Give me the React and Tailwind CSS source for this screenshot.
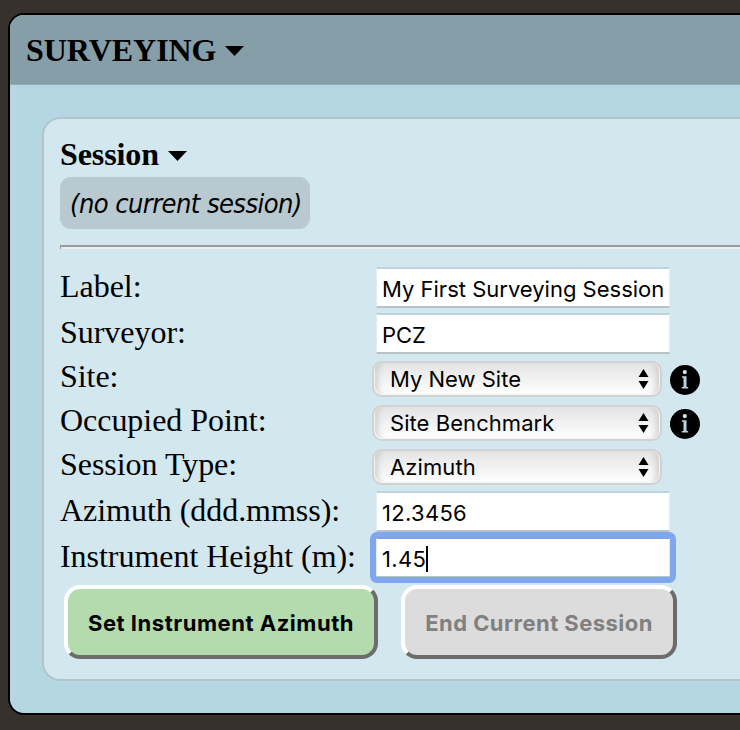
const Caret = () => (
  <svg className="mt-[3px] h-[10px] w-[19px]" viewBox="0 0 19 10">
    <path d="M0 0H19L9.5 10Z" fill="#000" />
  </svg>
);

const InfoIcon = () => (
  <svg className="mt-[9px] ml-[8px] h-[30px] w-[30px] shrink-0" viewBox="0 0 30 30">
    <circle cx="15" cy="15" r="15" fill="#000" />
    <circle cx="14.8" cy="7.1" r="2.1" fill="#d3e7ee" />
    <path d="M11.9 11.3H16.5V21.7L18.2 22.2V23.4H11.7V22.2L13.5 21.7V13L11.9 12.5Z" fill="#b8d3de" />
  </svg>
);

const TextRow = ({ label, value, focused, spacing }) => (
  <div className="flex h-[46px] items-start">
    <label className="mt-[4px] w-[316px] whitespace-nowrap text-[32px] leading-[36px] tracking-[-0.04px]">{label}</label>
    <div
      className={
        "flex w-[294px] items-center border-x border-x-[#e3ecef] border-b-[#b9c2c7] bg-white pl-[5px] font-['Inter',sans-serif] text-[22px] leading-[30px] whitespace-nowrap " +
        (focused
          ? "relative z-10 mt-[4px] h-[39px] rounded-[1px] border-t border-b border-t-[#7a9fe3] pt-[3px] outline-[6px] outline-[#80a6ee]"
          : "mt-[3px] h-[41px] border-t-2 border-b-2 border-t-[#bdd3db] pt-[3px]")
      }
    >
      <span className={spacing}>{value}</span>
      {focused && <span className="h-[26px] w-[2px] bg-black" />}
    </div>
  </div>
);

const SelectRow = ({ label, value, info, spacing }) => (
  <div className="flex h-[44px] items-start">
    <label className="mt-[2px] w-[312px] whitespace-nowrap text-[32px] leading-[36px] tracking-[-0.04px]">{label}</label>
    <div className="mt-[5px] flex h-[36px] w-[290px] shrink-0 items-center justify-between rounded-[10px] border-2 border-[#d2d2d2] bg-linear-to-b from-[#e4e4e4] to-white pr-[11px] pl-[16px] font-['Inter',sans-serif] text-[22px] leading-[30px] whitespace-nowrap shadow-[inset_1px_-1px_1px_#f6f6f6,inset_-1px_0_1px_#f6f6f6,inset_8px_0_7px_-5px_#c8c8c8,inset_-8px_0_7px_-5px_#c8c8c8]">
      <span className={spacing}>{value}</span>
      <svg className="-mt-px h-[20px] w-[11px]" viewBox="0 0 11 20">
        <path d="M5.5 0L10.5 8H0.5ZM5.5 20L0.5 12H10.5Z" fill="#000" />
      </svg>
    </div>
    {info && <InfoIcon />}
  </div>
);

export default function App() {
  return (
    <div className="h-[730px] w-[740px] overflow-hidden bg-[#37312e] pt-[13px] pl-[8px] font-['Liberation_Serif',serif] text-black">
      <main className="h-[702px] w-[800px] overflow-hidden rounded-[16px] border-2 border-black bg-[#b5d7e3]">
        <header className="flex h-[70px] items-center gap-[9px] border-b border-[#91abb5] bg-[#869ea8] pl-[16px]">
          <h1 className="text-[32px] leading-[36px] font-bold tracking-[-0.05px]">SURVEYING</h1>
          <Caret />
        </header>
        <section className="mt-[32px] ml-[32px] h-[564px] w-[760px] rounded-[18px] border-2 border-[#b3c4cb] bg-[#d3e7ee] pl-[16px]">
          <div className="flex items-center gap-[9px] pt-[17px]">
            <h2 className="text-[32px] leading-[36px] font-bold tracking-[-0.1px]">Session</h2>
            <Caret />
          </div>
          <div className="mt-[5px] flex h-[52px] w-[250px] items-center rounded-[11px] bg-[#b8c9d0] pt-[2px] pl-[10px] font-['DejaVu_Sans_Condensed','DejaVu_Sans',sans-serif] font-stretch-condensed text-[27px] leading-[30px] tracking-[-0.57px] whitespace-nowrap italic">
            (no current session)
          </div>
          <hr className="mt-[16px] h-[4px] border-0 border-t-2 border-l border-[#9a9a9a] bg-[#eeeeee]" />
          <form className="mt-[15px]">
            <TextRow label="Label:" value="My First Surveying Session" spacing="tracking-[0px]" />
            <TextRow label="Surveyor:" value="PCZ" spacing="tracking-[0px]" />
            <SelectRow label="Site:" value="My New Site" spacing="tracking-[0px]" info />
            <SelectRow label="Occupied Point:" value="Site Benchmark" spacing="tracking-[0.06px]" info />
            <SelectRow label="Session Type:" value="Azimuth" spacing="tracking-[0.1px]" />
            <TextRow label="Azimuth (ddd.mmss):" value="12.3456" spacing="tracking-[0.3px]" />
            <TextRow label="Instrument Height (m):" value="1.45" spacing="tracking-[0.3px]" focused />
            <div className="mt-[5px] ml-[4px] flex gap-[23px] font-['Inter',sans-serif] text-[22px] font-bold whitespace-nowrap">
              <button type="button" className="h-[74px] w-[314px] rounded-[16px] border-4 border-t-white border-r-[#6c6c6c] border-b-[#6c6c6c] border-l-white bg-[#b3dbad] pt-[2px]">
                <span className="tracking-[0.53px]">Set Instrument Azimuth</span>
              </button>
              <button type="button" disabled className="h-[74px] w-[276px] rounded-[16px] border-4 border-t-white border-r-[#6c6c6c] border-b-[#6c6c6c] border-l-white bg-[#dcdcdc] pt-[2px] text-[#808080]">
                <span className="tracking-[0.45px]">End Current Session</span>
              </button>
            </div>
          </form>
        </section>
      </main>
    </div>
  );
}
